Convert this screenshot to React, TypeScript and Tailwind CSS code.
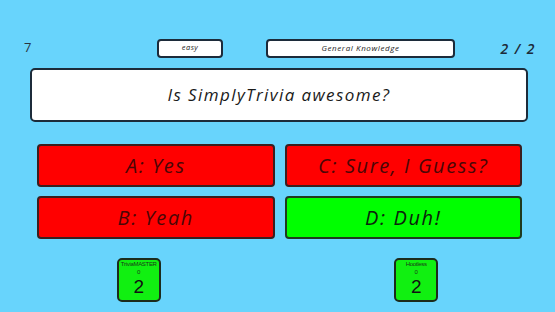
const ANSWERS = [
  { label: 'A: Yes', correct: false },
  { label: 'C: Sure, I Guess?', correct: false },
  { label: 'B: Yeah', correct: false },
  { label: 'D: Duh!', correct: true },
];

const PLAYERS = [
  { name: 'TriviaMASTER', score: 0, streak: 2 },
  { name: 'Hootless', score: 0, streak: 2 },
];

export default function App() {
  return (
    <div
      className="w-[555px] h-[312px] bg-[#68d4fc] overflow-hidden text-[#1a1a1a]"
      style={{ fontFamily: '"Open Sans", "DejaVu Sans", sans-serif' }}
    >
      {/* Top bar */}
      <div className="flex items-center h-[20px] mt-[38px]">
        <div className="w-[157px] pl-[24px] text-[13px] text-[#2a3440]">7</div>
        <div className="w-[66px] h-[19px] bg-white border-2 border-[#1c2b3a] rounded-[4px] flex items-center justify-center text-[7.5px] italic tracking-[0.4px]">
          easy
        </div>
        <div className="w-[189px] h-[19px] ml-[43px] bg-white border-2 border-[#1c2b3a] rounded-[4px] flex items-center justify-center text-[8px] italic tracking-[0.6px]">
          General Knowledge
        </div>
        <div className="flex-1 text-right pr-[19px] text-[14px] italic font-semibold text-[#1c2b3a] tracking-[1.5px]">
          2 / 2
        </div>
      </div>

      {/* Question */}
      <div className="ml-[30px] mr-[27px] mt-[10px] h-[54px] bg-white border-2 border-[#1c2b3a] rounded-[5px] flex items-center justify-center text-[17px] italic tracking-[1.4px]">
        Is SimplyTrivia awesome?
      </div>

      {/* Answers */}
      <div className="grid grid-cols-2 gap-x-[10px] gap-y-[9px] ml-[37px] mr-[33px] mt-[22px]">
        {ANSWERS.map((a) => (
          <div
            key={a.label}
            className={
              a.correct
                ? 'h-[43px] bg-[#00ff00] border-2 border-[#1f3a1f] rounded-[4px] flex items-center justify-center text-[20px] italic tracking-[1.6px] text-[#0c220c]'
                : 'h-[43px] bg-[#ff0000] border-2 border-[#3a1f1f] rounded-[4px] flex items-center justify-center text-[20px] italic tracking-[1.6px] text-[#4a0606]'
            }
          >
            {a.label}
          </div>
        ))}
      </div>

      {/* Players */}
      <div className="flex mt-[19px]">
        {PLAYERS.map((p) => (
          <div key={p.name} className="flex-1 flex justify-center">
            <div
              className="w-[44px] h-[44px] bg-[#11f011] border-2 border-[#1c2b1c] rounded-[5px] flex flex-col items-center text-[#1a3a1a]"
              style={{ fontFamily: '"Liberation Sans", Arial, sans-serif' }}
            >
              <div className="text-[6px] leading-[7px] mt-[1px] tracking-[-0.3px]">{p.name}</div>
              <div className="text-[6px] leading-[8px]">{p.score}</div>
              <div className="text-[19px] leading-[21px] text-[#111]">{p.streak}</div>
            </div>
          </div>
        ))}
      </div>
    </div>
  );
}
